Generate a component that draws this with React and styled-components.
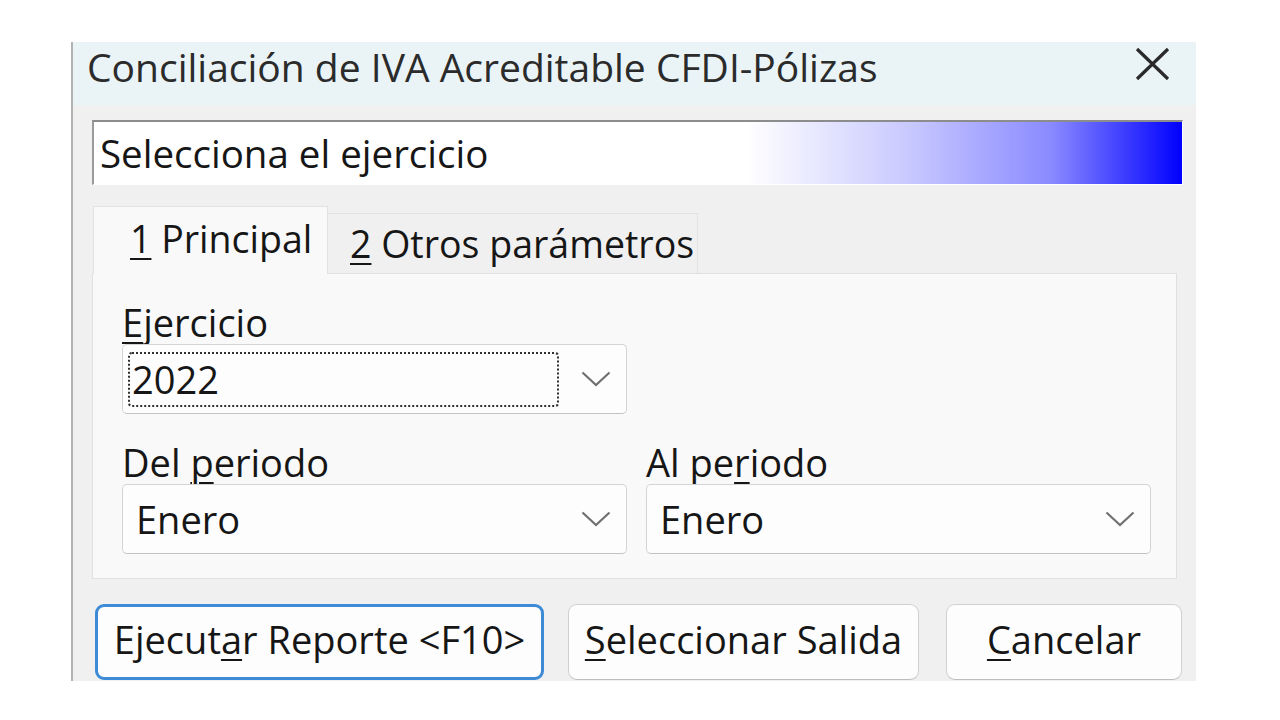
import React from 'react'
import styled, { createGlobalStyle } from 'styled-components'

const GlobalStyle = createGlobalStyle`
  html, body {
    margin: 0;
    padding: 0;
    background: #ffffff;
  }
  body {
    font-family: "Open Sans", "Noto Sans", "DejaVu Sans", sans-serif;
    color: #161616;
  }
`

const Page = styled.div`
  padding: 42px 0 0 71px;
  height: 720px;
  box-sizing: border-box;
`

const Dialog = styled.div`
  width: 1125px;
  height: 639px;
  box-sizing: border-box;
  border-left: 2px solid #b2b2b2;
  background: #f0f0f0;
  display: flex;
  flex-direction: column;
`

const TitleBar = styled.div`
  height: 63px;
  box-sizing: border-box;
  flex-shrink: 0;
  background: #eaf4f7;
  display: flex;
  align-items: flex-start;
  justify-content: space-between;
  padding: 1px 26px 0 14px;
  font-size: 39px;
  color: #2b2b2b;
`

const Title = styled.span`
  line-height: 48px;
`

const CloseIcon = styled.svg`
  width: 35px;
  height: 34px;
  margin-top: 4px;
`

const Body = styled.div`
  padding: 15px 13px 0 19px;
  display: flex;
  flex-direction: column;
`

const Banner = styled.div`
  height: 65px;
  box-sizing: border-box;
  border-top: 2px solid #8c8c8c;
  border-left: 2px solid #9a9a9a;
  border-right: 1px solid #ffffff;
  border-bottom: 1px solid #ffffff;
  background: linear-gradient(to right, #ffffff 0%, #ffffff 60%, #c8c8ff 75%, #8a8aff 88%, #0000ff 100%);
  display: flex;
  align-items: center;
  padding-left: 6px;
  font-size: 38.5px;
`

const TabStrip = styled.div`
  display: flex;
  align-items: flex-end;
  margin-top: 20px;
  height: 68px;
  padding-left: 1px;
`

const Tab = styled.div`
  box-sizing: border-box;
  width: ${p => p.$width}px;
  height: ${p => (p.$active ? 68 : 60)}px;
  padding-left: ${p => p.$pad}px;
  background: ${p => (p.$active ? '#f9f9f9' : '#f0f0f0')};
  border: 1px solid #e2e2e2;
  border-bottom: none;
  ${p => !p.$active && 'border-left: none;'}
  display: flex;
  align-items: center;
  padding-bottom: ${p => (p.$active ? 4 : 0)}px;
  font-size: 37.5px;
  white-space: nowrap;
  position: relative;
  z-index: ${p => (p.$active ? 1 : 0)};
  margin-bottom: ${p => (p.$active ? -1 : 0)}px;
`

const Panel = styled.div`
  width: 1085px;
  height: 306px;
  box-sizing: border-box;
  border: 1px solid #e0e0e0;
  background: #f9f9f9;
  padding: 26px 25px 0 29px;
  display: grid;
  grid-template-columns: 505px 505px;
  column-gap: 19px;
  align-content: start;
`

const Field = styled.div`
  display: flex;
  flex-direction: column;
  grid-column: ${p => p.$span || 'auto'};
  margin-top: ${p => p.$top || 0}px;
`

const Label = styled.div`
  font-size: 38px;
  line-height: 44px;
  height: 44px;
  white-space: nowrap;
`

const Mn = styled.u`
  text-decoration-thickness: 2px;
  text-underline-offset: 5px;
`

const Combo = styled.div`
  box-sizing: border-box;
  width: 505px;
  height: 70px;
  background: #fdfdfd;
  border: 1px solid #d4d4d4;
  border-bottom-color: #c2c2c2;
  border-radius: 5px;
  display: flex;
  align-items: center;
  justify-content: space-between;
  padding: 0 15px 0 ${p => (p.$focus ? 5 : 13)}px;
  font-size: 38px;
`

const FocusBox = styled.div`
  box-sizing: border-box;
  width: 431px;
  height: 55px;
  border: 2px dotted #303030;
  border-radius: 4px;
  display: flex;
  align-items: center;
  padding-left: 2px;
`

const Chevron = styled.svg`
  width: 30px;
  height: 16px;
`

const ButtonRow = styled.div`
  display: flex;
  margin-top: 25px;
  padding-left: 3px;
`

const Button = styled.div`
  box-sizing: border-box;
  width: ${p => p.$width}px;
  height: 76px;
  margin-left: ${p => p.$gap || 0}px;
  background: #fdfdfd;
  border: ${p => (p.$default ? '3px solid #3d8ad6' : '1px solid #d0d0d0')};
  border-bottom-color: ${p => (p.$default ? '#3d8ad6' : '#bdbdbd')};
  border-radius: 9px;
  display: flex;
  align-items: center;
  justify-content: center;
  font-size: 38px;
  white-space: nowrap;
  padding-bottom: 6px;
`

const ChevronDown = () => (
  <Chevron viewBox="0 0 30 16">
    <path d="M1.5 1.5 L15 14 L28.5 1.5" fill="none" stroke="#707070" strokeWidth="2.2" />
  </Chevron>
)

export default function App() {
  return (
    <>
      <GlobalStyle />
      <Page>
        <Dialog>
          <TitleBar>
            <Title>Conciliación de IVA Acreditable CFDI-Pólizas</Title>
            <CloseIcon viewBox="0 0 35 34">
              <path d="M2 2 L33 32 M33 2 L2 32" stroke="#2a2a2a" strokeWidth="3.2" fill="none" />
            </CloseIcon>
          </TitleBar>
          <Body>
            <Banner>Selecciona el ejercicio</Banner>
            <TabStrip>
              <Tab $active $width={235} $pad={36}>
                <span><Mn>1</Mn> Principal</span>
              </Tab>
              <Tab $width={370} $pad={22}>
                <span><Mn>2</Mn> Otros parámetros</span>
              </Tab>
            </TabStrip>
            <Panel>
              <Field $span="1 / -1">
                <Label><Mn>E</Mn>jercicio</Label>
                <Combo $focus>
                  <FocusBox>2022</FocusBox>
                  <ChevronDown />
                </Combo>
              </Field>
              <Field $top={26}>
                <Label>Del <Mn>p</Mn>eriodo</Label>
                <Combo>
                  <span>Enero</span>
                  <ChevronDown />
                </Combo>
              </Field>
              <Field $top={26}>
                <Label>Al pe<Mn>r</Mn>iodo</Label>
                <Combo>
                  <span>Enero</span>
                  <ChevronDown />
                </Combo>
              </Field>
            </Panel>
            <ButtonRow>
              <Button $default $width={449}>
                <span>Ejecut<Mn>a</Mn>r Reporte &lt;F10&gt;</span>
              </Button>
              <Button $width={351} $gap={24}>
                <span><Mn>S</Mn>eleccionar Salida</span>
              </Button>
              <Button $width={236} $gap={27}>
                <span><Mn>C</Mn>ancelar</span>
              </Button>
            </ButtonRow>
          </Body>
        </Dialog>
      </Page>
    </>
  )
}
